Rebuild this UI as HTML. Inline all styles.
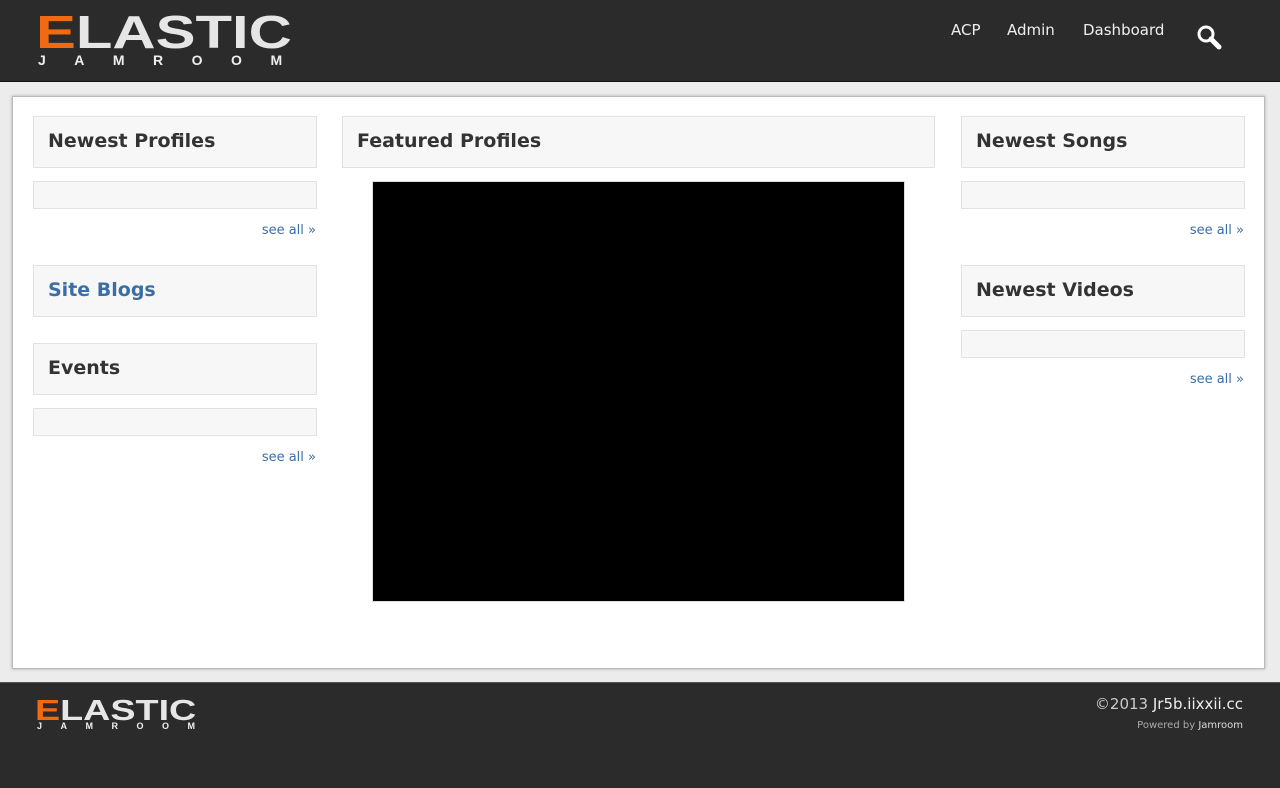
<!DOCTYPE html>
<html><head><meta charset="utf-8"><style>
*{margin:0;padding:0;box-sizing:border-box}
body{width:1280px;height:788px;background:#ececec;font-family:"DejaVu Sans","Liberation Sans",sans-serif;position:relative;overflow:hidden}
.hdr{position:absolute;left:0;top:0;width:1280px;height:82px;background:#2b2b2b;border-bottom:1px solid #111}
.logo{position:absolute;font-family:"Liberation Sans",sans-serif;font-weight:bold;color:#e6e6e6;transform-origin:0 0;white-space:nowrap}
.logo b{color:#f06a12}
.sub{position:absolute;font-family:"Liberation Sans",sans-serif;font-weight:bold;color:#eee;white-space:nowrap}
.nav{position:absolute;top:21px;color:#eee;font-size:15px}
.box{position:absolute;left:12px;top:96px;width:1253px;height:573px;background:#fff;border:1px solid #bbb;box-shadow:0 0 3px #aaa}
.h{position:absolute;height:52px;background:#f7f7f7;border:1px solid #e2e2e2;font-weight:bold;font-size:19px;color:#333;padding:13px 14px}
.bar{position:absolute;height:28px;background:#f7f7f7;border:1px solid #e2e2e2}
.see{position:absolute;font-size:13px;color:#3a6ea5;text-align:right}
.ftr{position:absolute;left:0;top:682px;width:1280px;height:106px;background:#2b2b2b;border-top:1px solid #555}
</style></head><body>
<div class="hdr">
<div class="logo" style="left:36px;top:9px;font-size:46px;line-height:46px;transform:scaleX(1.3)"><b>E</b>LASTIC</div>
<div class="sub" style="left:38px;top:52px;font-size:14px;letter-spacing:28.5px">JAMROOM</div>
<div class="nav" style="left:951px">ACP</div>
<div class="nav" style="left:1007px">Admin</div>
<div class="nav" style="left:1083px">Dashboard</div>
<svg style="position:absolute;left:1196px;top:24px" width="26" height="26" viewBox="0 0 26 26"><circle cx="10" cy="10" r="7" fill="none" stroke="#fff" stroke-width="3"/><path d="M15 15l8 8" stroke="#fff" stroke-width="5" stroke-linecap="round"/></svg>
</div>
<div class="box">
<div class="h" style="left:20px;top:19px;width:284px">Newest Profiles</div>
<div class="bar" style="left:20px;top:84px;width:284px"></div>
<div class="see" style="left:19px;top:126px;width:284px">see all »</div>
<div class="h" style="left:20px;top:168px;width:284px;color:#3a6ea5">Site Blogs</div>
<div class="h" style="left:20px;top:246px;width:284px">Events</div>
<div class="bar" style="left:20px;top:311px;width:284px"></div>
<div class="see" style="left:19px;top:353px;width:284px">see all »</div>
<div class="h" style="left:329px;top:19px;width:593px">Featured Profiles</div>
<div style="position:absolute;left:359px;top:84px;width:533px;height:421px;background:#000;border:1px solid #ddd"></div>
<div class="h" style="left:948px;top:19px;width:284px">Newest Songs</div>
<div class="bar" style="left:948px;top:84px;width:284px"></div>
<div class="see" style="left:947px;top:126px;width:284px">see all »</div>
<div class="h" style="left:948px;top:168px;width:284px">Newest Videos</div>
<div class="bar" style="left:948px;top:233px;width:284px"></div>
<div class="see" style="left:947px;top:275px;width:284px">see all »</div>
</div>
<div class="ftr">
<div class="logo" style="left:35px;top:13px;font-size:29px;line-height:30px;transform:scaleX(1.3)"><b>E</b>LASTIC</div>
<div class="sub" style="left:37px;top:38px;font-size:9px;letter-spacing:18.5px">JAMROOM</div>
<div style="position:absolute;right:37px;top:12px;color:#ccc;font-size:15px">©2013 <span style="color:#eee">Jr5b.iixxii.cc</span></div>
<div style="position:absolute;right:37px;top:37px;color:#aaa;font-size:10px">Powered by <span style="color:#ddd">Jamroom</span></div>
</div>
</body></html>
